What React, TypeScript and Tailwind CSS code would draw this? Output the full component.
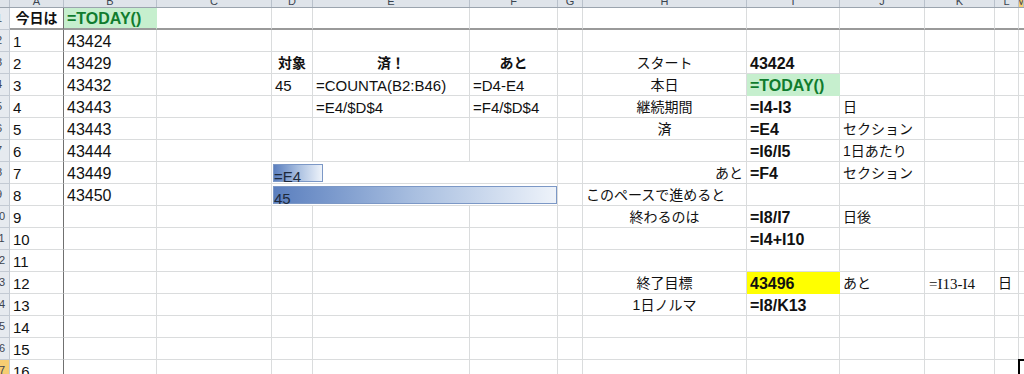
import type { ReactNode } from "react";

type Cell = {
  text: string;
  span?: number;
  align?: "l" | "c" | "r";
  mid?: boolean;
  bold?: boolean;
  jp?: boolean;
  serif?: boolean;
  fill?: "good" | "yellow";
  bar?: number;
};

const COLS = ["A", "B", "C", "D", "E", "F", "G", "H", "I", "J", "K", "L", "M"];

const GRID =
  "grid grid-cols-[10px_54px_93px_115px_41px_157px_88px_25px_164px_93px_85px_70px_24px_1fr]";

const jp = (text: string, extra: Partial<Cell> = {}): Cell => ({ text, jp: true, mid: true, align: "c", ...extra });
const strong = (text: string, extra: Partial<Cell> = {}): Cell => ({ text, bold: true, ...extra });

// sheet contents, one entry per row (row 1 is the "今日は" row)
const sheet: Record<string, Cell>[] = [
  { A: jp("今日は", { bold: true }), B: strong("=TODAY()", { fill: "good" }) },
  { A: { text: "1" }, B: { text: "43424" } },
  {
    A: { text: "2" },
    B: { text: "43429" },
    D: jp("対象", { bold: true }),
    E: jp("済！", { bold: true }),
    F: jp("あと", { bold: true }),
    H: jp("スタート"),
    I: strong("43424"),
  },
  {
    A: { text: "3" },
    B: { text: "43432" },
    D: { text: "45" },
    E: { text: "=COUNTA(B2:B46)" },
    F: { text: "=D4-E4" },
    H: jp("本日"),
    I: strong("=TODAY()", { fill: "good" }),
  },
  {
    A: { text: "4" },
    B: { text: "43443" },
    E: { text: "=E4/$D$4" },
    F: { text: "=F4/$D$4" },
    H: jp("継続期間"),
    I: strong("=I4-I3"),
    J: jp("日", { align: "l" }),
  },
  { A: { text: "5" }, B: { text: "43443" }, H: jp("済"), I: strong("=E4"), J: jp("セクション", { align: "l" }) },
  { A: { text: "6" }, B: { text: "43444" }, I: strong("=I6/I5"), J: jp("1日あたり", { align: "l" }) },
  {
    A: { text: "7" },
    B: { text: "43449" },
    D: { text: "=E4", span: 3, bar: 50 },
    H: jp("あと", { align: "r" }),
    I: strong("=F4"),
    J: jp("セクション", { align: "l" }),
  },
  {
    A: { text: "8" },
    B: { text: "43450" },
    D: { text: "45", span: 3, bar: 284 },
    H: jp("このペースで進めると", { align: "l" }),
  },
  { A: { text: "9" }, H: jp("終わるのは"), I: strong("=I8/I7"), J: jp("日後", { align: "l" }) },
  { A: { text: "10" }, I: strong("=I4+I10") },
  { A: { text: "11" } },
  {
    A: { text: "12" },
    H: jp("終了目標"),
    I: strong("43496", { fill: "yellow" }),
    J: jp("あと", { align: "l" }),
    K: { text: "=I13-I4", serif: true },
    L: jp("日", { align: "l" }),
  },
  { A: { text: "13" }, H: jp("1日ノルマ"), I: strong("=I8/K13") },
  { A: { text: "14" } },
  { A: { text: "15" } },
  { A: { text: "16" } },
];

const SELECTED_ROW = 17;

function ColumnHeader() {
  return (
    <div className={`${GRID} h-[8px] overflow-hidden border-b border-[#9ba4ae] bg-[#dfe4ea]`}>
      <div className="border-r border-[#b9c1cb]" />
      {COLS.map((c) => (
        <div
          key={c}
          className={`flex items-end justify-center overflow-hidden border-r border-[#b9c1cb] ${
            c === "M" ? "bg-[#f6cd72]" : ""
          }`}
        >
          <span className="pb-[1px] text-[11px] leading-[10px] text-[#3b4450]">{c}</span>
        </div>
      ))}
    </div>
  );
}

function DataBar({ width, children }: { width: number; children: ReactNode }) {
  return (
    <div className="relative h-full w-full pb-[1px] pl-[1px] pt-[2px]">
      <div
        className="h-full border border-[#7c98c6] bg-gradient-to-r from-[#5b7fbe] via-[#a9bfe0] to-[#eef3fa]"
        style={{ width }}
      />
      <span className="absolute bottom-[-2px] left-[2px] text-[15px] leading-[16px] text-[#1e2a3c]">
        {children}
      </span>
    </div>
  );
}

function SheetCell({ col, cell, first }: { col: string; cell?: Cell; first: boolean }) {
  const span = cell?.span === 3 ? "col-span-3" : "";
  const fill =
    cell?.fill === "good" ? "bg-[#c6efce]" : cell?.fill === "yellow" ? "bg-[#ffff00]" : "";
  const right = col === "A" ? "border-r-[#707070]" : cell?.fill ? "border-r-transparent" : "border-r-[#dadcdd]";
  const bottom = first
    ? "border-b-2 border-b-[#9a9a9a]"
    : cell?.fill
      ? "border-b border-b-transparent"
      : "border-b border-b-[#dadcdd]";

  if (cell?.bar) {
    return (
      <div className={`${span} border-r border-r-[#dadcdd] ${bottom}`}>
        <DataBar width={cell.bar}>{cell.text}</DataBar>
      </div>
    );
  }

  const justify = cell?.align === "c" ? "justify-center" : cell?.align === "r" ? "justify-end" : "justify-start";
  const valign = cell?.mid ? "items-center leading-[18px]" : "items-end pb-[1px] leading-[16px]";
  const size = cell?.jp ? "text-[14px]" : cell?.bold ? "text-[16px]" : col === "B" ? "text-[16px]" : "text-[15px]";
  const tone = cell?.fill === "good" ? "text-[#107c2e]" : "text-[#111]";

  return (
    <div
      className={`${span} flex min-w-0 whitespace-nowrap border-r px-[3px] ${right} ${bottom} ${fill} ${justify} ${valign} ${size} ${tone} ${
        cell?.bold ? "font-bold" : ""
      } ${cell?.serif ? "pl-[4px] font-['Liberation_Serif',serif]" : ""}`}
    >
      {cell?.text}
    </div>
  );
}

function SheetRow({ index, cells }: { index: number; cells: Record<string, Cell> }) {
  const rowNo = index + 1;
  const first = index === 0;
  const selected = rowNo === SELECTED_ROW;
  const items: ReactNode[] = [];
  let i = 0;
  while (i < COLS.length) {
    const col = COLS[i];
    const cell = cells[col];
    items.push(<SheetCell key={col} col={col} cell={cell} first={first} />);
    i += cell?.span ?? 1;
  }

  return (
    <div className={`${GRID} relative h-[22px]`}>
      {/* row header is scrolled mostly out of view, only its right edge shows */}
      <div
        className={`flex items-center justify-end overflow-hidden border-b border-r border-[#c3cad3] text-[11px] text-[#3b4450] ${
          selected ? "bg-[#f6cd72]" : "bg-[#e6eaef]"
        }`}
      >
        <span className="w-[20px] shrink-0 text-center">{rowNo}</span>
      </div>
      {items}
      {selected ? (
        <div className="absolute left-[1018px] top-[-1px] h-[30px] w-[20px] border-l-2 border-t-2 border-black" />
      ) : null}
    </div>
  );
}

export default function App() {
  return (
    <div className="h-[374px] w-[1024px] overflow-hidden bg-white font-['Liberation_Sans','Noto_Sans_CJK_JP',sans-serif]">
      <ColumnHeader />
      {sheet.map((cells, i) => (
        <SheetRow key={i} index={i} cells={cells} />
      ))}
    </div>
  );
}
